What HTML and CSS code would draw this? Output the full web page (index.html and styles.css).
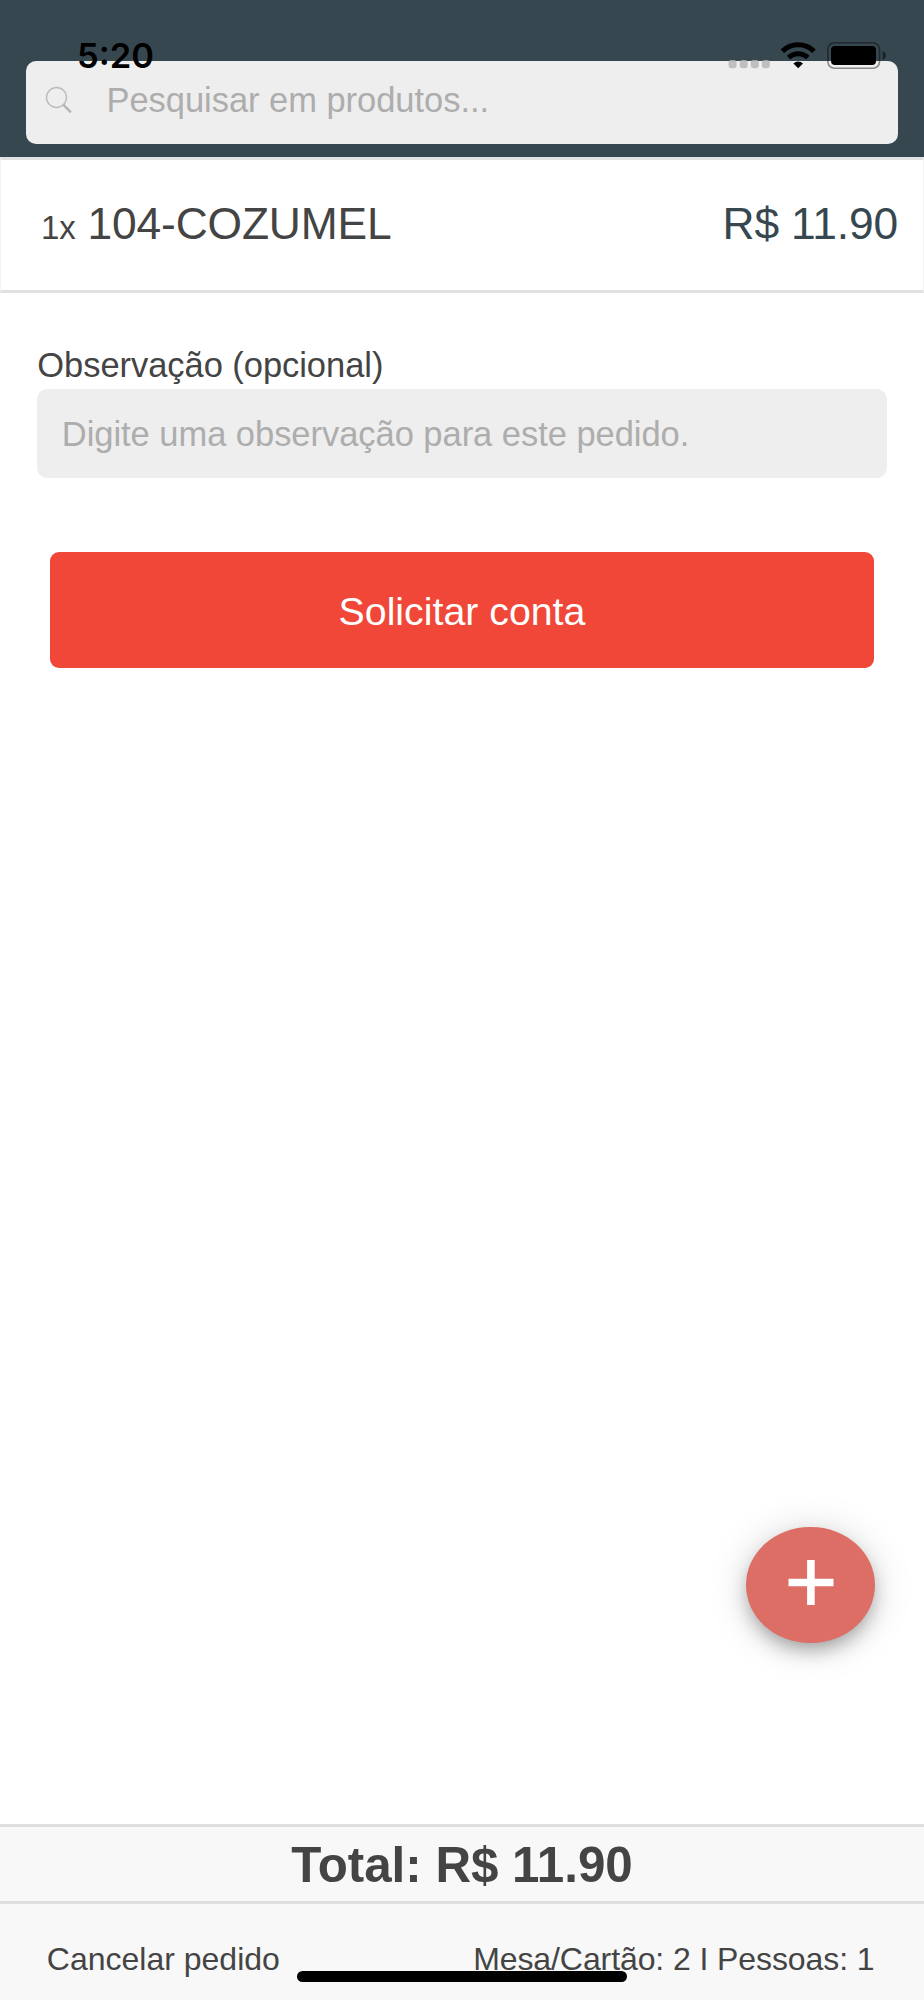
FILE: index.html
```html
<!DOCTYPE html>
<html lang="pt-BR">
<head>
<meta charset="utf-8">
<title>Pedido</title>
<link rel="stylesheet" href="styles.css">
</head>
<body>
<div class="app">
  <header class="header">
    <div class="search">
      <svg class="search-icon" viewBox="0 0 28 28"><circle cx="11.5" cy="11.5" r="10" fill="none" stroke="#bcbcbc" stroke-width="1.4"/><path d="M18.2 18.6L26 26.4" fill="none" stroke="#b4b4b4" stroke-width="2.2"/></svg>
      <span class="search-text">Pesquisar em produtos...</span>
    </div>
    <div class="status">
      <span class="clock">5:20</span>
      <svg class="status-icons" viewBox="0 0 160 30">
        <g fill="#bfbfbf"><rect x="0.6" y="20.2" width="8" height="8" rx="2.4"/><rect x="11.7" y="20.2" width="8" height="8" rx="2.4"/><rect x="22.8" y="20.2" width="8" height="8" rx="2.4"/><rect x="33.9" y="20.2" width="8" height="8" rx="2.4"/></g>
        <g fill="none" stroke="#000" stroke-width="5.1"><path d="M54.4 11.2C63.2 2.6 77.2 2.6 86 11.2"/><path d="M60.6 17.6C66 12.4 74.4 12.4 79.8 17.6"/></g>
        <path d="M65.4 23.5C68.2 20.7 72.2 20.7 75 23.5L70.2 28.3Z"/>
        <rect x="99.9" y="2.7" width="51.6" height="25.6" rx="6.5" fill="none" stroke="#000" stroke-opacity=".42" stroke-width="1.6"/>
        <rect x="103" y="6" width="45" height="19" rx="4"/>
        <path d="M154.6 11Q158 12.6 158 15.5T154.6 20Z" fill-opacity=".5"/>
      </svg>
    </div>
  </header>
  <main class="content">
    <div class="item">
      <div class="item-name"><span class="qty">1x</span><span>104-COZUMEL</span></div>
      <div class="price">R$ 11.90</div>
    </div>
    <div class="form">
      <div class="label">Observação (opcional)</div>
      <div class="input">Digite uma observação para este pedido.</div>
      <div class="button">Solicitar conta</div>
    </div>
  </main>
  <footer class="footer">
    <div class="total">Total: R$ 11.90</div>
    <div class="actions"><span>Cancelar pedido</span><span class="table-info">Mesa/Cartão: 2 I Pessoas: 1</span></div>
  </footer>
  <div class="fab"><svg class="plus" viewBox="0 0 46 46"><path d="M0.5 22.5H45.5M22.9 0.1V45.1" stroke="#fff" stroke-width="7.6"/></svg></div>
  <div class="home-indicator"></div>
</div>
</body>
</html>
```
FILE: styles.css
```css
* { box-sizing: border-box; }
body {
  margin: 0;
  background: #fff;
  font-family: "Liberation Sans", Arial, sans-serif;
  color: #444;
}
.app {
  position: relative;
  display: flex;
  flex-direction: column;
  width: 924px;
  height: 2000px;
  overflow: hidden;
  white-space: nowrap;
}
.header {
  height: 157px;
  padding: 60.5px 26px 0;
  background: #37474f;
}
.search {
  display: flex;
  align-items: center;
  height: 83.8px;
  padding: 0 0 4px 18.8px;
  border-radius: 10px;
  background: #eee;
}
.search-icon {
  width: 28px;
  height: 28px;
  margin-right: 33.7px;
}
.search-text {
  font-size: 34.5px;
  letter-spacing: -0.04px;
  color: #adadad;
}
.status {
  position: absolute;
  top: 40px;
  left: 0;
  display: flex;
  justify-content: space-between;
  width: 100%;
  padding: 0 36px 0 77px;
}
.clock {
  font: 600 34.5px/30px Inter, sans-serif;
  margin-top: 1px;
  color: #000;
}
.status-icons { width: 160px; height: 30px; }
.content { flex: 1; }
.item {
  display: flex;
  justify-content: space-between;
  align-items: center;
  height: 136px;
  padding: 0 25px 2px 40px;
  border: solid #e1e1e1;
  border-width: 3px 1px;
  border-left-color: #f3f3f3;
  border-right-color: #f3f3f3;
  font-size: 44.35px;
}
.item-name {
  display: flex;
  align-items: baseline;
  gap: 12px;
  letter-spacing: -0.15px;
}
.qty { font-size: 33px; }
.price { color: #37474f; letter-spacing: -0.15px; }
.form { padding: 52px 37.3px 0; }
.label {
  height: 44.1px;
  font-size: 34.5px;
  line-height: 40px;
  letter-spacing: -0.05px;
}
.input {
  height: 88.7px;
  padding-left: 24.5px;
  border-radius: 10px;
  background: #eee;
  color: #adadad;
  font-size: 34.5px;
  line-height: 91.5px;
  letter-spacing: -0.04px;
}
.button {
  height: 116px;
  margin: 73.8px 12.4px 0;
  padding-top: 2px;
  border-radius: 9px;
  background: #f04739;
  color: #fff;
  font-size: 39.3px;
  line-height: 115px;
  text-align: center;
}
.footer {
  height: 176px;
  background: #f8f8f8;
}
.total {
  height: 77px;
  border-top: 3px solid #dedede;
  font-size: 49.3px;
  font-weight: bold;
  line-height: 75px;
  text-align: center;
}
.actions {
  display: flex;
  justify-content: space-between;
  height: 99px;
  padding: 0 49.5px 0 46.8px;
  border-top: 3px solid #dedede;
  font-size: 32px;
  line-height: 111px;
}
.table-info { letter-spacing: -0.09px; }
.fab {
  position: absolute;
  right: 49.5px;
  top: 1526.6px;
  width: 128.2px;
  height: 116.4px;
  padding: 33px 0 0 41.4px;
  border-radius: 50%;
  background: #dd6e66;
  box-shadow: 0 9px 20px -4px rgba(0,0,0,.36), 0 3px 42px rgba(0,0,0,.14);
}
.plus { display: block; width: 46px; height: 46px; }
.home-indicator {
  position: absolute;
  left: 297px;
  top: 1970.8px;
  width: 330px;
  height: 11.4px;
  border-radius: 6px;
  background: #000;
}
```
